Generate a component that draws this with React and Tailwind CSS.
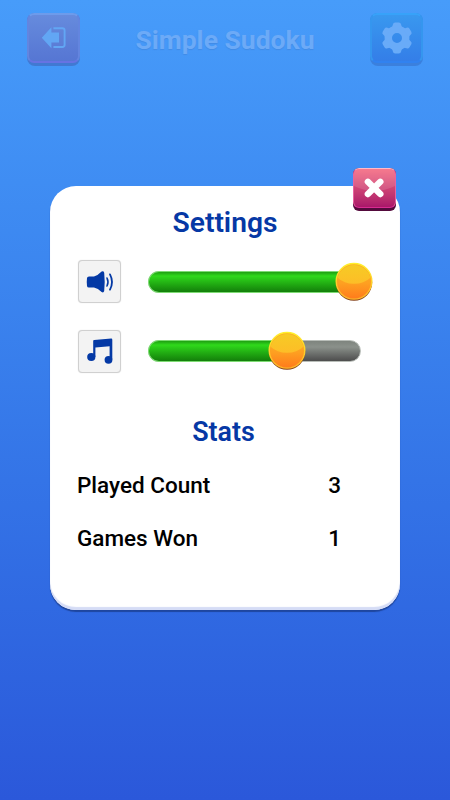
const SLIDERS = [
  { id: 'sound', value: 97.2, icon: SoundIcon },
  { id: 'music', value: 65.3, icon: MusicIcon },
];

const STATS = [
  { label: 'Played Count', value: 3 },
  { label: 'Games Won', value: 1 },
];

function ExitIcon() {
  return (
    <svg width="26" height="24" viewBox="0 0 26 24" className="text-[#62a6f4]">
      <path d="M0.8 11.7 L10.4 1.2 V6.6 H18 V16.4 H10.4 V22.3 Z" fill="currentColor" />
      <path d="M12.4 2.2 H21.4 Q23.6 2.2 23.6 4.4 V18.8 Q23.6 21 21.4 21 H12.4" fill="none" stroke="currentColor" strokeWidth="1.9" />
    </svg>
  );
}

function GearIcon() {
  return (
    <svg width="32" height="32" viewBox="0 0 32 32" className="text-[#69abf8]">
      <circle cx="16" cy="16" r="8.7" fill="none" stroke="currentColor" strokeWidth="7.4" />
      {[0, 60, 120, 180, 240, 300].map((angle) => (
        <path
          key={angle}
          d="M10.2 6 Q11.6 4.9 11.9 2.6 Q12.2 0.5 14.2 0.5 H17.8 Q19.8 0.5 20.1 2.6 Q20.4 4.9 21.8 6 Z"
          fill="currentColor"
          transform={`rotate(${angle} 16 16)`}
        />
      ))}
    </svg>
  );
}

function SoundIcon() {
  return (
    <svg width="28" height="24" viewBox="0 0 28 24" className="text-[#0439a5]">
      <path
        d="M1 8 Q1.2 6.5 3 6.4 H8 Q12 5.5 15.6 1.6 Q17.6 0.7 18.2 2.8 Q19.2 12 18.2 21 Q17.6 23.2 15.6 22 Q12 18.5 8 17.6 H3 Q1.2 17.5 1 16 Q0.5 12 1 8 Z"
        fill="currentColor"
      />
      <path d="M21 8 Q23 12 21 16" fill="none" stroke="currentColor" strokeWidth="1.6" strokeLinecap="round" />
      <path d="M24 4.4 Q28 12 24 19.6" fill="none" stroke="currentColor" strokeWidth="1.8" strokeLinecap="round" />
    </svg>
  );
}

function MusicIcon() {
  return (
    <svg width="28" height="28" viewBox="0 0 28 28" className="text-[#0439a5]">
      <path
        d="M7.2 3.8 Q7.2 3 8.2 2.9 L25.2 1.6 Q26.3 1.6 26.3 2.7 V22.6 H23.6 V9.2 L9.4 10.4 V20 H7.2 Z"
        fill="currentColor"
      />
      <ellipse cx="5.3" cy="20" rx="4.1" ry="3.9" fill="currentColor" />
      <ellipse cx="22.5" cy="22.8" rx="3.9" ry="3.9" fill="currentColor" />
    </svg>
  );
}

function Knob() {
  return (
    <svg width="38" height="40" viewBox="0 0 38 40">
      <defs>
        <linearGradient id="knobBase" x1="0" y1="0" x2="0" y2="1">
          <stop offset="0" stopColor="#fcb022" />
          <stop offset="0.55" stopColor="#fea021" />
          <stop offset="1" stopColor="#ff7a1c" />
        </linearGradient>
        <linearGradient id="knobRim" x1="0" y1="0" x2="0" y2="1">
          <stop offset="0" stopColor="#fff02a" />
          <stop offset="1" stopColor="#ffb52a" />
        </linearGradient>
        <linearGradient id="knobGloss" x1="0" y1="0" x2="0" y2="1">
          <stop offset="0" stopColor="#f6cb25" />
          <stop offset="1" stopColor="#fdbd27" />
        </linearGradient>
      </defs>
      <circle cx="19" cy="20.6" r="18.2" fill="#844018" />
      <circle cx="19" cy="19.3" r="17.8" fill="url(#knobBase)" stroke="url(#knobRim)" strokeWidth="1.4" />
      <path d="M2.6 15.8 A16.9 16.9 0 0 1 35.4 15.8 Q29 21.8 19 21.8 Q9 21.8 2.6 15.8 Z" fill="url(#knobGloss)" />
    </svg>
  );
}

function Slider({ value, icon: Icon }) {
  return (
    <div className="flex items-center">
      <div className="flex h-[43px] w-[43px] items-center justify-center rounded-[4px] border-[1.5px] border-[#d0d0d0] bg-[#f3f3f3] shadow-[0_0_1px_#d4d4d4]">
        <Icon />
      </div>
      <div className="relative ml-[27px] h-[22px] w-[213px] overflow-visible rounded-full border border-[#b9beb9] bg-linear-to-b from-[#7e847e] via-[#8b918b] via-30% to-[#4d4d4d]">
        <div
          className="-m-px h-[22px] rounded-l-full border border-r-0 border-[#7edb74] bg-linear-to-b from-[#1f9f12] via-[#2fd91b] via-20% to-[#137f0a]"
          style={{ width: `${value}%` }}
        />
        <div className="absolute -top-[10px] -translate-x-1/2" style={{ left: `${value}%` }}>
          <Knob />
        </div>
      </div>
    </div>
  );
}

function CloseButton() {
  return (
    <button className="absolute -top-[18px] right-[4px] flex h-[43px] w-[43.5px] items-start rounded-[6px] bg-[#540a3c]">
      <span className="relative h-[40px] w-full overflow-hidden rounded-[6px] border-[1.5px] border-[#e862a0] border-t-[#ffb9c6] border-b-[#d82b91] bg-linear-to-b from-[#f5677f] to-[#aa1769]">
        <svg width="41" height="37" viewBox="0 0 41 37" className="absolute inset-0">
          <path d="M0 0 H41 V17 Q20.5 27 0 17 Z" fill="#fff" opacity="0.12" />
          <path d="M13.9 12.8 L26.3 25 M26.3 12.8 L13.9 25" stroke="#fff" strokeWidth="6.4" strokeLinecap="round" />
        </svg>
      </span>
    </button>
  );
}

export default function App() {
  return (
    <main
      className="h-[800px] w-[450px] overflow-hidden bg-linear-to-b from-[#479cfa] to-[#2b58da]"
      style={{ fontFamily: 'Roboto, sans-serif' }}
    >
      {/* Header */}
      <header className="flex items-start justify-between px-[27px] pt-[13px]">
        <button className="flex h-[53px] w-[53px] items-start rounded-[8px] bg-[#4179d2]">
          <span className="flex h-[50px] w-full items-center justify-center rounded-[7px] border-2 border-[#6385df] border-t-[#6d9beb] border-b-[#6673e3] bg-linear-to-b from-[#668bdd] to-[#5676d3]">
            <ExitIcon />
          </span>
        </button>
        <h1 className="mt-[10px] text-[26.5px] leading-[34px] font-bold text-[#6caaf7] [text-shadow:0_1px_1px_#418be6]">
          Simple Sudoku
        </h1>
        <button className="flex h-[53px] w-[53px] items-start rounded-[8px] bg-[#3b80dd]">
          <span className="flex h-[50px] w-full items-center justify-center rounded-[7px] border-2 border-[#3596ef] border-t-[#37a2f9] border-b-[#3182f0] bg-linear-to-b from-[#3998ef] to-[#347ee8] pl-px">
            <GearIcon />
          </span>
        </button>
      </header>

      {/* Settings dialog */}
      <section className="relative mx-[50px] mt-[120px] h-[424px] rounded-[26px] bg-white px-[28px] pt-[20px] shadow-[inset_0_-3px_1px_#d5dcf6,0_2px_1px_#1e469f]">
        <CloseButton />
        <h2 className="text-center text-[28.2px] leading-[34px] font-semibold text-[#0638a5]">Settings</h2>
        <div className="mt-[20px] flex flex-col gap-[26.5px]">
          {SLIDERS.map((slider) => (
            <Slider key={slider.id} value={slider.value} icon={slider.icon} />
          ))}
        </div>

        <h2 className="mt-[42.5px] pr-[3px] text-center text-[26.8px] leading-[34px] font-semibold text-[#0638a5]">Stats</h2>
        <dl className="-ml-px mt-[21px] flex flex-col gap-[23px] pr-[31px] text-[22.5px] leading-[30px] font-medium text-black">
          {STATS.map(({ label, value }) => (
            <div key={label} className="flex justify-between">
              <dt>{label}</dt>
              <dd>{value}</dd>
            </div>
          ))}
        </dl>
      </section>
    </main>
  );
}
